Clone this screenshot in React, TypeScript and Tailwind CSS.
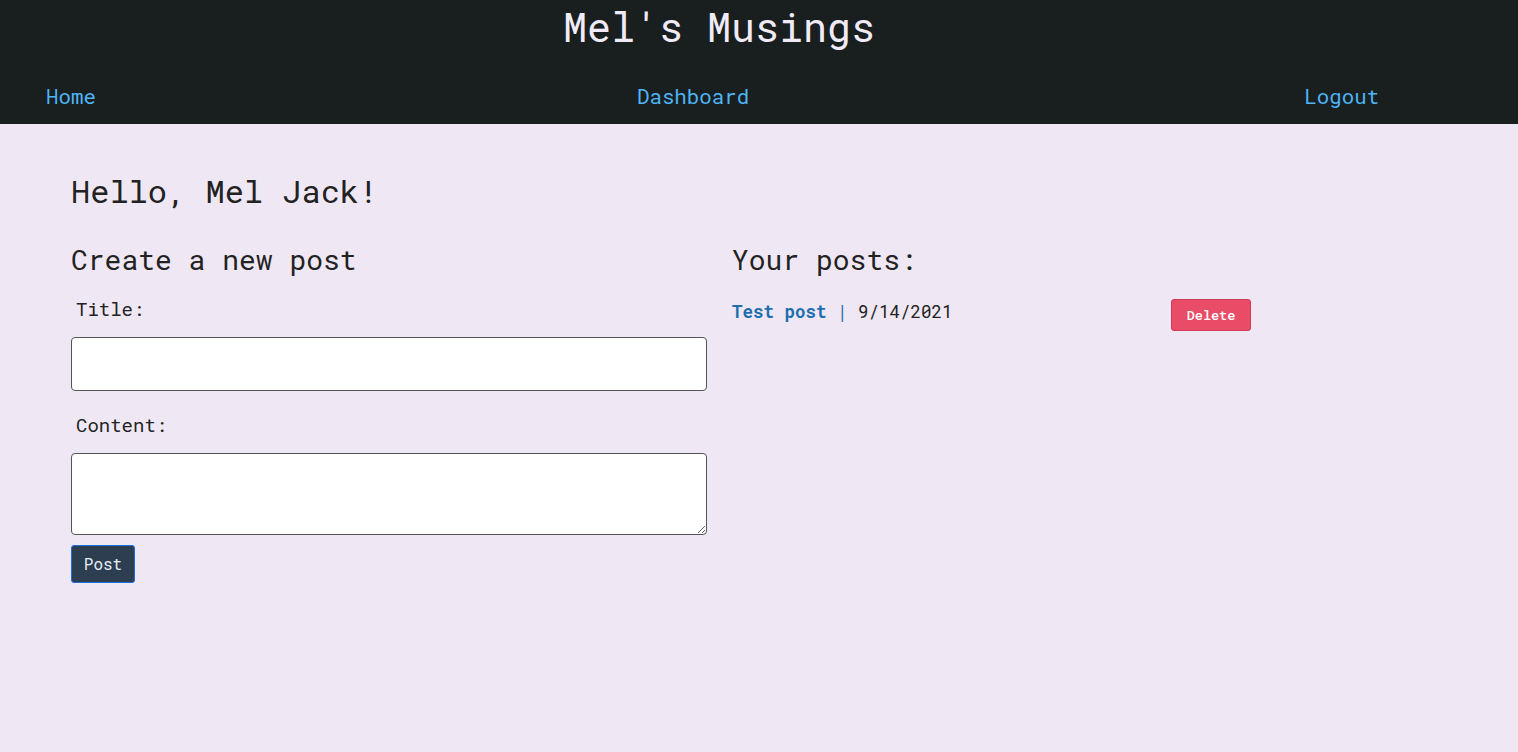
export default function App() {
  const mono = { fontFamily: '"Roboto Mono", "DejaVu Sans Mono", monospace' };
  return (
    <div className="min-h-[752px] bg-[#efe8f4] text-[#222222]" style={mono}>
      <header className="h-[124px] overflow-hidden bg-[#191e1f]">
        <h1 className="pr-[80px] pt-[4px] text-center text-[40px] leading-[46px] text-[#f1ebf7]">Mel's Musings</h1>
        <nav className="mt-[32px] flex items-center pl-[46px] text-[20.8px] leading-[28px] text-[#4db5f5]">
          <a href="#">Home</a>
          <a href="#" className="ml-[541px]">Dashboard</a>
          <a href="#" className="ml-[555px]">Logout</a>
        </nav>
      </header>

      <main className="px-[71px] pt-[48px]">
        <h2 className="text-[32px] leading-[38px]">Hello, Mel Jack!</h2>
        <div className="mt-[33px] grid grid-cols-[636px_636px] gap-[25px]">
          <section>
            <h3 className="text-[28px] leading-[34px]">Create a new post</h3>
            <form className="flex flex-col">
              <label className="mt-[18px] pl-[5px] text-[19px] leading-[28px]">Title:</label>
              <input className="mt-[14px] h-[54px] rounded-[4px] border border-[#555555] bg-white px-2" />
              <label className="mt-[20px] pl-[5px] text-[19px] leading-[28px]">Content:</label>
              <textarea className="mt-[14px] h-[82px] rounded-[4px] border border-[#555555] bg-white px-2" />
              <button
                type="button"
                className="mt-[10px] h-[38px] w-[64px] rounded-[3px] border border-[#1a6fe0] bg-[#2c3e50] text-[16px] text-[#e6eef5]"
              >
                Post
              </button>
            </form>
          </section>
          <section>
            <h3 className="text-[28px] leading-[34px]">Your posts:</h3>
            <div className="mt-[24px] flex items-start">
              <p className="w-[439px] text-[17.5px] leading-[22px]">
                <a href="#" className="font-bold text-[#1f6fb0]">Test post</a>
                <span className="text-[#1f6fb0]"> | </span>
                <span>9/14/2021</span>
              </p>
              <button
                type="button"
                className="-mt-[2px] h-[32px] w-[80px] rounded-[3px] border border-[#d23a55] bg-[#e84c67] text-[13.5px] font-medium text-white"
              >
                Delete
              </button>
            </div>
          </section>
        </div>
      </main>
    </div>
  );
}
